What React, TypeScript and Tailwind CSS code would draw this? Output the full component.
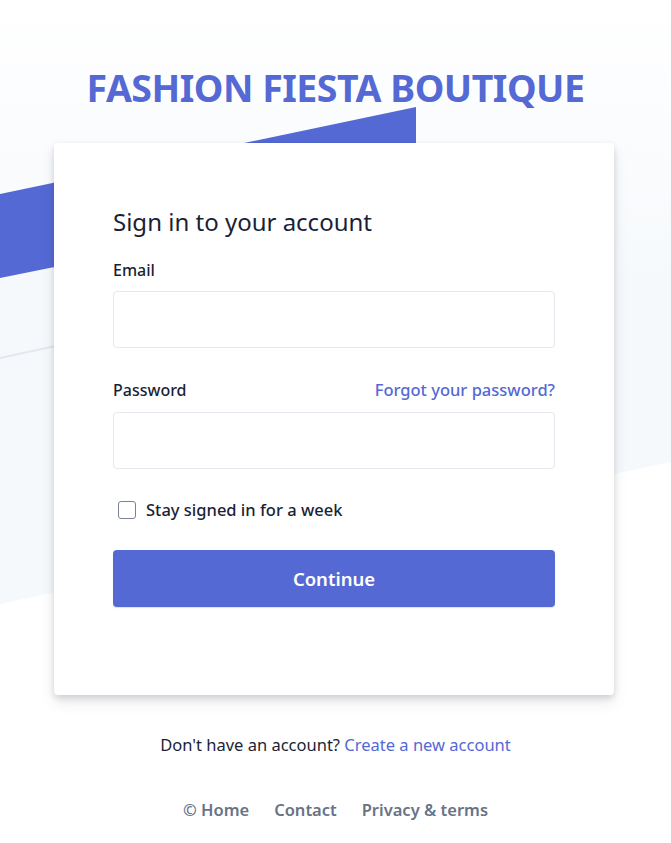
import { useState } from "react";

const font = { fontFamily: '"Noto Sans", "Open Sans", sans-serif' };

// decorative background: tinted skewed panel, blue stripe and a faint line
const Backdrop = () => (
  <div className="absolute inset-0 pointer-events-none">
    <div className="absolute inset-x-0 top-0 h-[620px] bg-[linear-gradient(180deg,#ffffff_0%,#f6f9fc_45%)] [clip-path:polygon(0_0,100%_0,100%_462px,0_604px)]" />
    <svg className="absolute left-0 top-0" width="671" height="420" viewBox="0 0 671 420">
      <polygon points="0,194 416,107 416,194 0,278" fill="#5469d4" />
      <line x1="0" y1="358" x2="300" y2="293" stroke="#e3e8ee" strokeWidth="2" />
    </svg>
  </div>
);

export default function App() {
  const [remember, setRemember] = useState(false);

  return (
    <div style={font} className="relative min-h-screen overflow-hidden bg-white text-[#1a1f36]">
      <Backdrop />

      <div className="relative flex flex-col items-center pt-[64px]">
        <h1 className="text-[37.5px] leading-[48px] font-bold tracking-[-0.5px] text-[#5469d4]">
          FASHION FIESTA BOUTIQUE
        </h1>

        <div className="mt-[31px] mr-[3px] w-[560px] bg-white rounded-[4px] shadow-[0_7px_14px_0_rgba(60,66,87,0.12),0_3px_6px_0_rgba(0,0,0,0.12)] px-[59px] pt-[63px] pb-[88px]">
          <h2 className="text-[24px] leading-8 font-normal">Sign in to your account</h2>

          <form className="mt-5 flex flex-col" onSubmit={(e) => e.preventDefault()}>
            <label htmlFor="email" className="text-[16px] leading-6 font-medium">
              Email
            </label>
            <input
              id="email"
              type="email"
              className="mt-[9px] h-[57px] w-full rounded-[4px] border border-[#e3e8ee] bg-white px-4 outline-none"
            />

            <div className="mt-[30px] flex items-center justify-between">
              <label htmlFor="password" className="text-[16px] leading-6 font-medium">
                Password
              </label>
              <a href="#" className="text-[16.5px] leading-6 font-medium text-[#5469d4]">
                Forgot your password?
              </a>
            </div>
            <input
              id="password"
              type="password"
              className="mt-[10px] h-[57px] w-full rounded-[4px] border border-[#e3e8ee] bg-white px-4 outline-none"
            />

            <label className="mt-[29px] flex items-center gap-[10px] pl-[5px] cursor-pointer">
              <input
                type="checkbox"
                checked={remember}
                onChange={(e) => setRemember(e.target.checked)}
                className="appearance-none w-[18px] h-[18px] rounded-[3px] border border-[#7a8394] bg-white checked:bg-[#5469d4]"
              />
              <span className="text-[16.5px] leading-6 font-medium">Stay signed in for a week</span>
            </label>

            <button
              type="submit"
              className="mt-[28px] h-[57px] w-full rounded-[4px] bg-[#5469d4] text-white text-[18.5px] font-semibold shadow-[0_1px_1px_rgba(0,0,0,0.12)]"
            >
              Continue
            </button>
          </form>
        </div>

        <p className="mt-[38px] text-[16.5px] leading-6">
          Don't have an account?{" "}
          <a href="#" className="text-[#5469d4]">
            Create a new account
          </a>
        </p>

        <footer className="mt-[41px] flex items-center gap-[25px] text-[16.5px] leading-6 font-semibold text-[#697386]">
          <a href="#">© Home</a>
          <a href="#">Contact</a>
          <a href="#">Privacy &amp; terms</a>
        </footer>
      </div>
    </div>
  );
}
